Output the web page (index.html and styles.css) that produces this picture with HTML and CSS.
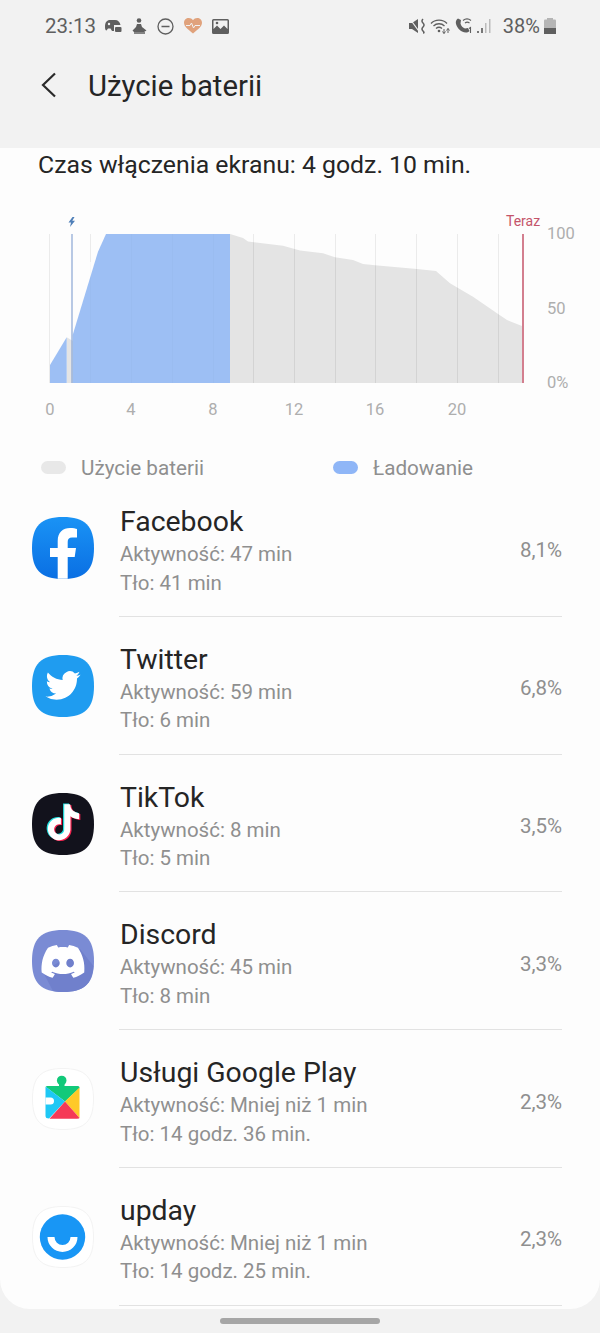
FILE: index.html
```html
<!DOCTYPE html>
<html>
<head>
	<title>Użycie baterii</title>
	<meta charset="utf-8">
	<link rel="stylesheet" href="styles.css">
</head>
<body>
	<div class="status">
		<span class="clock">23:13</span>
		<div class="status-left">
			<svg width="17" height="14" viewBox="0 0 17 14"><path d="M0 8C0 3 2 1 5 1H10C13 1 15 3 15.500 6H9V12H7L5.500 9.500H3L1.500 11.500C.5 11.500 0 10 0 8Z" fill="#5f5f5f"/><rect x="10" y="8" width="6.500" height="5" rx="1" fill="#5f5f5f"/><circle cx="4" cy="5" r="1.200" fill="#f2f2f2"/></svg>
			<svg width="15" height="16" viewBox="0 0 15 16"><circle cx="7" cy="2.500" r="2.300" fill="#5f5f5f"/><path d="M5 6H9L10 9 14.500 12.500 12 14H2L.5 12.500 4 9Z" fill="#5f5f5f"/><path d="M2 15H13" stroke="#5f5f5f" stroke-width="1.500"/></svg>
			<svg width="17" height="17" viewBox="0 0 17 17"><circle cx="8.500" cy="8.500" r="7.500" fill="none" stroke="#5f5f5f" stroke-width="1.300"/><path d="M4.500 8.500H12.500" stroke="#5f5f5f" stroke-width="1.500"/></svg>
			<svg width="18" height="16" viewBox="0 0 18 16"><path d="M9 15.500C4 11.500 0 8.500 0 4.800 0 2 2.200 0 4.800 0 6.500 0 8 .8 9 2.300 10 .8 11.500 0 13.200 0 15.800 0 18 2 18 4.800 18 8.500 14 11.500 9 15.500Z" fill="#e0a27c"/><path d="M2 7.500H6L7.500 5 9.500 10 11 7.500H16" fill="none" stroke="#f2f2f2" stroke-width="1"/></svg>
			<svg width="17" height="15" viewBox="0 0 17 15"><path d="M0 1.500Q0 0 1.500 0H15.500Q17 0 17 1.500V13.500Q17 15 15.500 15H1.500Q0 15 0 13.500ZM1.500 1.500V10L5 6.500 8.500 10 12 6.500 15.500 10V1.500Z" fill="#5f5f5f" fill-rule="evenodd"/><circle cx="5" cy="4" r="1.300" fill="#5f5f5f"/></svg>
		</div>
		<div class="status-right">
			<svg width="17" height="16" viewBox="0 0 17 16"><path d="M0 5H3L9 1V15L3 11H0Z" fill="#5f5f5f"/><path d="M1 1L10.500 14" stroke="#f2f2f2" stroke-width="1.200"/><path d="M14 1Q12 3 14 5T14 9 14 13 14 15" fill="none" stroke="#5f5f5f" stroke-width="1.500"/></svg>
			<svg width="21" height="16" viewBox="0 0 21 16"><path d="M1 5.500C5 1 13 1 17 5.500M3.500 8C6.500 5 11.500 5 14.500 8M6 10.500C8 8.800 10 8.800 12 10.500" fill="none" stroke="#5f5f5f" stroke-width="1.300"/><circle cx="9" cy="13" r="1.300" fill="#5f5f5f"/><path d="M14 11V15.500M12.500 13.500L14 15.500 15.500 13.500M18 15V10.500M16.500 12.500L18 10.500 19.500 12.500" fill="none" stroke="#5f5f5f" stroke-width="1"/></svg>
			<svg width="18" height="16" viewBox="0 0 18 16"><path d="M3 .5L6 2 5.500 5.500C6 8 8 10 10 10.500L13 10 14.500 13C12.500 15 10 15 7 13.500 3.500 11.500 1 8 .8 4.500.8 3 1.500 1.500 3 .5Z" fill="#5f5f5f"/><path d="M8 2.500C10.500 .5 13.500 .5 16 2.500M10 5C11.500 3.800 13 3.800 14.500 5" fill="none" stroke="#5f5f5f" stroke-width="1.100"/><path d="M15.500 15V9.500L14 10.500" fill="none" stroke="#5f5f5f" stroke-width="1.100"/></svg>
			<svg width="15" height="16" viewBox="0 0 15 16"><rect x="0" y="13" width="2" height="2" fill="#777"/><rect x="4" y="10" width="2" height="5" fill="#777"/><rect x="8" y="5" width="1.500" height="10" fill="#bbb"/><rect x="12" y="1" width="1.500" height="14" fill="#bbb"/></svg>
			<span class="level">38%</span>
			<svg class="battery" width="12" height="16" viewBox="0 0 12 16"><rect x="3" y="0" width="6" height="2" fill="#b5b5b5"/><rect x="0" y="1.500" width="12" height="14.500" rx="1" fill="#b5b5b5"/><rect x="0" y="10" width="12" height="6" fill="#5f5f5f"/></svg>
		</div>
	</div>

	<div class="header">
		<svg class="back" width="18" height="26" viewBox="0 0 18 26"><path d="M15 1.500L3 13 15 24.500" fill="none" stroke="#2a2a2a" stroke-width="2.200"/></svg>
		<h1>Użycie baterii</h1>
	</div>

	<div class="card">
		<p class="screen-time">Czas włączenia ekranu: 4 godz. 10 min.</p>

		<svg class="chart" width="600" height="222" viewBox="0 0 600 222">
			<g transform="translate(0,-198)">
				<polygon fill="#e4e4e4" points="230,234 243,238 248,241.500 283,245.700 300,250.500 323,253.300 335,257.300 353,260 363,264 375,265.300 417,269 436,271 450,283.300 467,293.300 473,296.700 497,313.300 507,320 522,326 522,383 230,383"/>
				<polygon fill="#e4e4e4" points="66.700,337.300 73,341 73,383 66.700,383"/>
				<polygon fill="#9dbff4" points="50,383 50,365 66.700,337.300 66.700,383"/>
				<polygon fill="#9dbff4" points="72.700,383 72.700,335 98,251.700 106,234 230,234 230,383"/>
				<path d="M49.500 234V383M90.500 234V262M253.500 234V383M294.500 234V383M335.500 234V383M375.500 234V383M416.500 234V383M457.500 234V383M498.500 234V383" stroke="#000" stroke-opacity=".07"/>
				<path d="M90.500 262V383M131.500 234V383M172.500 234V383M213.500 234V383" stroke="#000" stroke-opacity=".015"/>
				<path d="M72 234V383" stroke="#8aa6d4" stroke-width="1.200"/>
				<path d="M523 234V383" stroke="#c4546a" stroke-width="1.500"/>
				<path d="M72.500 217L68.500 222.500H71L70 227 75 220.800H72.300L74.500 217Z" fill="#4f7fb8"/>
				<text class="now" x="506" y="226">Teraz</text>
				<text class="tick" x="547" y="239">100</text>
				<text class="tick" x="547" y="314">50</text>
				<text class="tick" x="547" y="388">0%</text>
				<text class="tick" x="50" y="415" text-anchor="middle">0</text>
				<text class="tick" x="131" y="415" text-anchor="middle">4</text>
				<text class="tick" x="213" y="415" text-anchor="middle">8</text>
				<text class="tick" x="294" y="415" text-anchor="middle">12</text>
				<text class="tick" x="375" y="415" text-anchor="middle">16</text>
				<text class="tick" x="457" y="415" text-anchor="middle">20</text>
			</g>
		</svg>

		<div class="legend">
			<div class="legend-item used"><span class="swatch"></span>Użycie baterii</div>
			<div class="legend-item charging"><span class="swatch"></span>Ładowanie</div>
		</div>

		<ul class="apps">
			<li>
				<svg class="icon" width="62" height="62" viewBox="0 0 62 62">
					<defs><linearGradient id="fb" x1="0" y1="0" x2="0" y2="1"><stop offset="0" stop-color="#1a93f5"/><stop offset="1" stop-color="#0a6fe3"/></linearGradient></defs>
					<path d="M31 0C53 0 62 9 62 31 62 53 53 62 31 62 9 62 0 53 0 31 0 9 9 0 31 0Z" fill="url(#fb)"/>
					<path d="M25.700 61.800V40H18V31H25.700V24C25.700 15 31 11 38 11 41 11 44 11.500 45 12V20.500H40C37 20.500 35.700 22 35.700 25V31H44L42.700 40H35.700V61.800Z" fill="#fff"/>
				</svg>
				<div class="info">
					<div class="text">
						<div class="name">Facebook</div>
						<div class="sub">Aktywność: 47 min</div>
						<div class="sub">Tło: 41 min</div>
					</div>
					<div class="pct">8,1%</div>
				</div>
			</li>
			<li>
				<svg class="icon" width="62" height="62" viewBox="0 0 62 62">
					<path d="M31 0C53 0 62 9 62 31 62 53 53 62 31 62 9 62 0 53 0 31 0 9 9 0 31 0Z" fill="#1f9cf0"/>
					<path transform="translate(13.500,13) scale(1.460)" d="M23.953 4.570a10 10 0 01-2.825.775 4.958 4.958 0 002.163-2.723c-.951.555-2.005.959-3.127 1.184a4.920 4.920 0 00-8.384 4.482C7.690 8.095 4.067 6.130 1.640 3.162a4.822 4.822 0 00-.666 2.475c0 1.710.870 3.213 2.188 4.096a4.904 4.904 0 01-2.228-.616v.060a4.923 4.923 0 003.946 4.827 4.996 4.996 0 01-2.212.085 4.936 4.936 0 004.604 3.417 9.867 9.867 0 01-6.102 2.105c-.390 0-.779-.023-1.170-.067a13.995 13.995 0 007.557 2.209c9.053 0 13.998-7.496 13.998-13.985 0-.210 0-.420-.015-.630A9.935 9.935 0 0024 4.590z" fill="#fff"/>
				</svg>
				<div class="info">
					<div class="text">
						<div class="name">Twitter</div>
						<div class="sub">Aktywność: 59 min</div>
						<div class="sub">Tło: 6 min</div>
					</div>
					<div class="pct">6,8%</div>
				</div>
			</li>
			<li>
				<svg class="icon" width="62" height="62" viewBox="0 0 62 62">
					<defs><path id="tt" d="M12.525.020c1.310-.020 2.610-.010 3.910-.020.080 1.530.630 3.090 1.750 4.170 1.120 1.110 2.700 1.620 4.240 1.790v4.030c-1.440-.050-2.890-.350-4.200-.970-.570-.260-1.100-.590-1.620-.930-.010 2.920.010 5.840-.020 8.750-.080 1.400-.540 2.790-1.350 3.940-1.310 1.920-3.580 3.170-5.910 3.210-1.430.080-2.860-.310-4.080-1.030-2.020-1.190-3.440-3.370-3.650-5.710-.020-.500-.030-1-.010-1.490.180-1.900 1.120-3.720 2.580-4.960 1.660-1.440 3.980-2.130 6.150-1.720.020 1.480-.040 2.960-.040 4.440-.990-.320-2.150-.230-3.020.370-.630.410-1.110 1.040-1.360 1.750-.210.510-.150 1.070-.140 1.610.240 1.640 1.820 3.020 3.500 2.870 1.120-.010 2.190-.660 2.770-1.610.190-.330.400-.670.410-1.060.100-1.790.060-3.570.070-5.360.010-4.030-.010-8.050.020-12.070z"/></defs>
					<path d="M31 0C53 0 62 9 62 31 62 53 53 62 31 62 9 62 0 53 0 31 0 9 9 0 31 0Z" fill="#12121c"/>
					<use href="#tt" transform="translate(12.300,10.500) scale(1.500)" fill="#25e0e0"/>
					<use href="#tt" transform="translate(14.700,12) scale(1.500)" fill="#f5234f"/>
					<use href="#tt" transform="translate(13.500,11.200) scale(1.500)" fill="#fff"/>
				</svg>
				<div class="info">
					<div class="text">
						<div class="name">TikTok</div>
						<div class="sub">Aktywność: 8 min</div>
						<div class="sub">Tło: 5 min</div>
					</div>
					<div class="pct">3,5%</div>
				</div>
			</li>
			<li>
				<svg class="icon" width="62" height="62" viewBox="0 0 62 62">
					<path d="M31 0C53 0 62 9 62 31 62 53 53 62 31 62 9 62 0 53 0 31 0 9 9 0 31 0Z" fill="#7a8bd4"/>
					<path d="M48 19L61.500 36C60 54 52 62 31 62 27 62 24 61.700 21 61L11 42Z" fill="#7080cc"/>
					<path transform="translate(9.500,10) scale(1.790)" d="M20.317 4.370a19.791 19.791 0 00-4.885-1.515.074.074 0 00-.079.037c-.211.375-.445.865-.608 1.250-1.845-.276-3.680-.276-5.487 0-.164-.393-.406-.874-.618-1.250a.077.077 0 00-.079-.037 19.736 19.736 0 00-4.885 1.515.070.070 0 00-.032.028C.533 9.046-.319 13.580.099 18.058a.082.082 0 00.031.056c2.053 1.508 4.041 2.423 5.993 3.029a.078.078 0 00.084-.028c.462-.630.873-1.295 1.226-1.994a.076.076 0 00-.042-.106c-.653-.248-1.274-.550-1.872-.892a.077.077 0 01-.008-.128c.126-.094.252-.192.372-.291a.074.074 0 01.078-.011c3.928 1.793 8.180 1.793 12.061 0a.074.074 0 01.079.010c.120.099.246.198.373.292a.077.077 0 01-.007.128 12.299 12.299 0 01-1.873.891.077.077 0 00-.041.107c.360.698.772 1.363 1.225 1.993a.076.076 0 00.084.029c1.961-.607 3.950-1.522 6.002-3.029a.077.077 0 00.031-.055c.500-5.177-.838-9.674-3.548-13.660a.061.061 0 00-.031-.029zM8.020 15.331c-1.183 0-2.157-1.086-2.157-2.419 0-1.333.956-2.419 2.157-2.419 1.211 0 2.176 1.095 2.157 2.419 0 1.333-.956 2.419-2.157 2.419zm7.975 0c-1.183 0-2.157-1.086-2.157-2.419 0-1.333.955-2.419 2.157-2.419 1.211 0 2.176 1.095 2.157 2.419 0 1.333-.946 2.419-2.157 2.419z" fill="#fff"/>
				</svg>
				<div class="info">
					<div class="text">
						<div class="name">Discord</div>
						<div class="sub">Aktywność: 45 min</div>
						<div class="sub">Tło: 8 min</div>
					</div>
					<div class="pct">3,3%</div>
				</div>
			</li>
			<li>
				<svg class="icon" width="62" height="62" viewBox="0 0 62 62">
					<path d="M31 .5C53 .5 61.500 9 61.500 31 61.500 53 53 61.500 31 61.500 9 61.500 .5 53 .5 31 .5 9 9 .5 31 .5Z" fill="#fff" stroke="#f3f3f3"/>
					<circle cx="29.700" cy="12.500" r="4.800" fill="#12c97a"/>
					<rect x="27" y="15" width="5.500" height="4" fill="#12c97a"/>
					<path d="M15 18H46Q47.500 18 47.500 19.500V20L33 33.500 14 19Q14 18 15 18Z" fill="#12c97a"/>
					<path d="M13.500 18.500L33 33.500 17 50.500Q13.500 50.500 13.500 48Z" fill="#1ec8f5"/>
					<path d="M47.500 19.500V50L33 33.500Z" fill="#ffc928"/>
					<path d="M33 33.500L47.500 50Q47.500 50.800 45 50.800H17.500Z" fill="#f53a56"/>
					<path d="M13.500 29.500H18.500A3.500 3.500 0 0 1 18.500 36.500H13.500Z" fill="#fff"/>
				</svg>
				<div class="info">
					<div class="text">
						<div class="name">Usługi Google Play</div>
						<div class="sub">Aktywność: Mniej niż 1 min</div>
						<div class="sub">Tło: 14 godz. 36 min.</div>
					</div>
					<div class="pct">2,3%</div>
				</div>
			</li>
			<li>
				<svg class="icon" width="62" height="62" viewBox="0 0 62 62">
					<path d="M31 .5C53 .5 61.500 9 61.500 31 61.500 53 53 61.500 31 61.500 9 61.500 .5 53 .5 31 .5 9 9 .5 31 .5Z" fill="#fff" stroke="#f3f3f3"/>
					<circle cx="30.500" cy="31" r="22.700" fill="#1896f5"/>
					<path d="M15.500 31H22.500A8 8 0 0 0 38.500 31H45.500A15 15 0 0 1 15.500 31Z" fill="#fff"/>
				</svg>
				<div class="info">
					<div class="text">
						<div class="name">upday</div>
						<div class="sub">Aktywność: Mniej niż 1 min</div>
						<div class="sub">Tło: 14 godz. 25 min.</div>
					</div>
					<div class="pct">2,3%</div>
				</div>
			</li>
		</ul>
	</div>

	<div class="navbar"><span class="pill"></span></div>
</body>
</html>
```

FILE: styles.css
```css
html,body{
	margin: 0;
	padding: 0;
}
body{
	width: 600px;
	height: 1333px;
	overflow: hidden;
	background: #f2f2f2;
	font-family: Roboto, "Noto Sans", sans-serif;
	color: #252525;
}
.status{
	height: 52px;
	display: flex;
	align-items: center;
	padding: 0 44px 0 45px;
	color: #5f5f5f;
	font-size: 20.500px;
}
.status-left{
	display: flex;
	align-items: center;
	gap: 10px;
	margin-left: 9px;
}
.status-right{
	display: flex;
	align-items: center;
	gap: 4px;
	margin-left: auto;
}
.level{
	margin-left: 7px;
	font-size: 20px;
}
.header{
	height: 96px;
	display: flex;
	align-items: flex-start;
	padding-left: 40px;
}
.back{
	margin-top: 20px;
}
.header h1{
	margin: 15px 0 0 30px;
	font-size: 29.300px;
	font-weight: 400;
	line-height: 38px;
}
.card{
	height: 1161px;
	background: #fdfdfd;
	border-radius: 0 0 30px 30px;
	overflow: hidden;
}
.screen-time{
	margin: 0;
	padding: 3px 0 0 38px;
	font-size: 24.800px;
	line-height: 28px;
	height: 43px;
}
.chart{
	display: block;
	margin-top: 4px;
}
.chart .tick{
	font-size: 16.500px;
	fill: #aeaeae;
}
.chart .now{
	font-size: 14px;
	fill: #c4546a;
}
.legend{
	display: flex;
	padding: 36px 0 0 41px;
	font-size: 20.700px;
	color: #8f8f8f;
}
.legend-item{
	display: flex;
	align-items: center;
	gap: 15px;
	height: 23px;
}
.used{
	width: 292px;
}
.swatch{
	width: 25px;
	height: 13px;
	border-radius: 7px;
}
.used .swatch{
	background: #e8e8e8;
}
.charging .swatch{
	background: #8fb6f7;
}
.apps{
	list-style-type: none;
	margin: 0;
	padding: 0 38px 0 32px;
}
.apps li{
	display: flex;
	height: 137.800px;
}
.icon{
	flex: none;
	margin: 38px 25px 0 0;
}
.info{
	flex: 1;
	display: flex;
	justify-content: space-between;
	align-items: center;
	border-bottom: 1.500px solid #e2e2e2;
}
.text{
	align-self: flex-start;
	padding: 25px 0 0 1px;
}
.name{
	font-size: 28.400px;
	line-height: 36px;
	color: #252525;
}
.sub{
	font-size: 20.500px;
	line-height: 28.500px;
	color: #8f8f8f;
}
.pct{
	font-size: 20.500px;
	color: #8f8f8f;
	margin-top: 6px;
}
.navbar{
	height: 24px;
	display: flex;
	justify-content: center;
	padding-top: 9px;
}
.pill{
	width: 160px;
	height: 6px;
	border-radius: 3px;
	background: #a6a6a6;
}
```
